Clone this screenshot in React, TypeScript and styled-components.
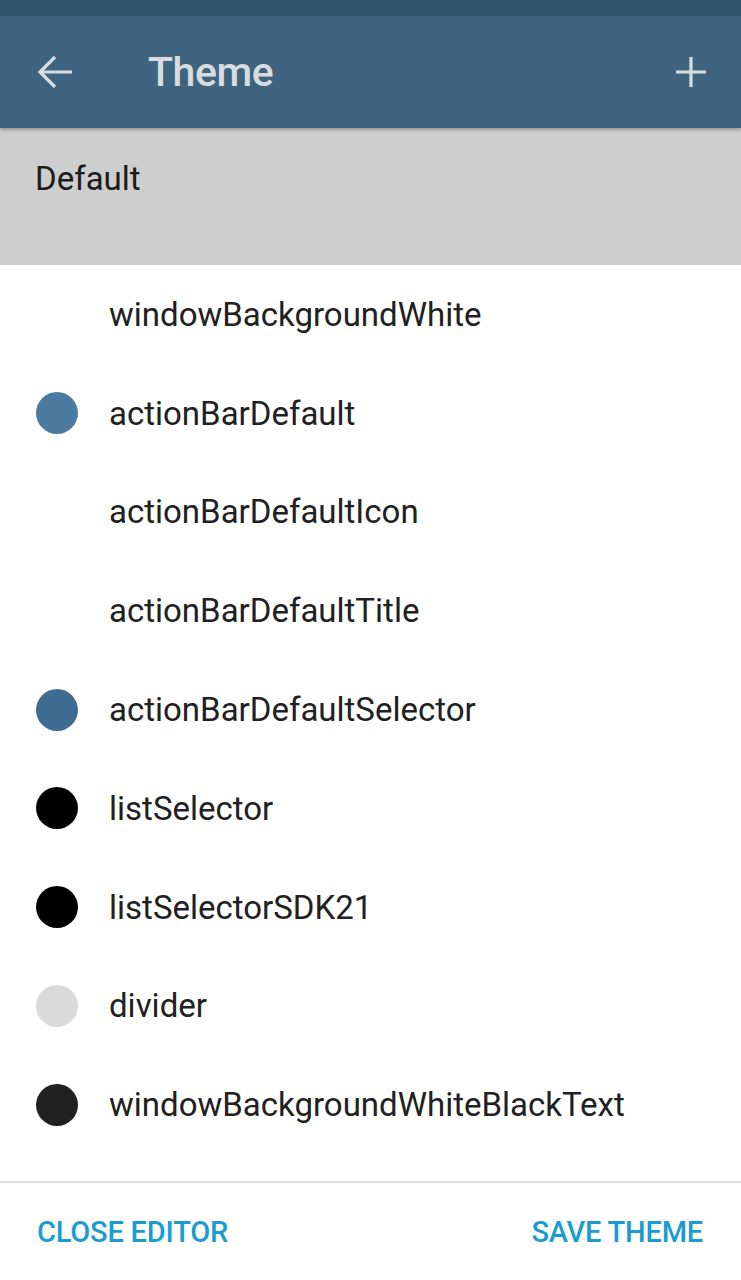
import styled, { createGlobalStyle } from 'styled-components';

const GlobalStyle = createGlobalStyle`
  html, body {
    margin: 0;
    padding: 0;
    background: #ffffff;
  }
  body {
    font-family: Roboto, "Noto Sans", sans-serif;
  }
`;

type Item = { name: string; color?: string };

const items: Item[] = [
  { name: 'windowBackgroundWhite' },
  { name: 'actionBarDefault', color: '#4c7ba1' },
  { name: 'actionBarDefaultIcon' },
  { name: 'actionBarDefaultTitle' },
  { name: 'actionBarDefaultSelector', color: '#3e6c93' },
  { name: 'listSelector', color: '#000000' },
  { name: 'listSelectorSDK21', color: '#000000' },
  { name: 'divider', color: '#dadada' },
  { name: 'windowBackgroundWhiteBlackText', color: '#212121' },
];

const App = () => {
  return (
    <Page>
      <GlobalStyle />
      <StatusBar />
      <ActionBar>
        <IconButton>
          <svg width='36' height='34' viewBox='0 0 36 34' fill='none'>
            <path d='M34 17H3M17 2L2 17l15 15' stroke='#d9dcdf' strokeWidth='3.2' />
          </svg>
        </IconButton>
        <Title>Theme</Title>
        <IconButton>
          <svg width='32' height='32' viewBox='0 0 32 32' fill='none'>
            <path d='M16 1v30M1 16h30' stroke='#d9dcdf' strokeWidth='3.2' />
          </svg>
        </IconButton>
      </ActionBar>
      <ThemeHeader>
        <ThemeName>Default</ThemeName>
      </ThemeHeader>
      <List>
        {items.map((item) => (
          <Row key={item.name}>
            <Dot $color={item.color} />
            <RowText>{item.name}</RowText>
          </Row>
        ))}
      </List>
      <Footer>
        <FooterButton>CLOSE EDITOR</FooterButton>
        <FooterButton>SAVE THEME</FooterButton>
      </Footer>
    </Page>
  );
};

const Page = styled.div`
  width: 741px;
  height: 1280px;
  display: flex;
  flex-direction: column;
  background: #ffffff;
  overflow: hidden;
`;

const StatusBar = styled.div`
  height: 16px;
  background: #34566c;
  flex-shrink: 0;
`;

const ActionBar = styled.div`
  height: 112px;
  background: #3f6480;
  display: flex;
  align-items: center;
  padding: 0 34px 0 38px;
  box-shadow: 0 2px 3px rgba(0, 0, 0, 0.25);
  position: relative;
  z-index: 1;
  flex-shrink: 0;
`;

const IconButton = styled.div`
  display: flex;
  align-items: center;
  justify-content: center;
`;

const Title = styled.div`
  flex: 1;
  margin-left: 74px;
  font-family: Roboto, sans-serif;
  font-weight: 500;
  font-size: 41px;
  color: #d9dcdf;
  letter-spacing: -0.4px;
`;

const ThemeHeader = styled.div`
  height: 137px;
  background: #cecece;
  padding: 31px 0 0 35px;
  box-sizing: border-box;
  flex-shrink: 0;
`;

const ThemeName = styled.div`
  font-family: Roboto, sans-serif;
  font-size: 33px;
  color: #1c1c1c;
`;

const List = styled.div`
  display: flex;
  flex-direction: column;
`;

const Row = styled.div`
  height: 98.8px;
  display: flex;
  align-items: center;
  padding-left: 36px;
`;

const Dot = styled.div<{ $color?: string }>`
  width: 42px;
  height: 42px;
  border-radius: 50%;
  background: ${({ $color }) => $color || 'transparent'};
  flex-shrink: 0;
`;

const RowText = styled.span`
  margin-left: 31px;
  font-family: Roboto, sans-serif;
  font-size: 33px;
  color: #212121;
`;

const Footer = styled.div`
  margin-top: auto;
  height: 99px;
  border-top: 2px solid #dcdcdc;
  display: flex;
  align-items: center;
  justify-content: space-between;
  padding: 0 38px 0 37px;
  box-sizing: border-box;
`;

const FooterButton = styled.span`
  font-family: Roboto, sans-serif;
  font-weight: 500;
  font-size: 29px;
  color: #1a9cd0;
  letter-spacing: -0.2px;
`;

export default App;
